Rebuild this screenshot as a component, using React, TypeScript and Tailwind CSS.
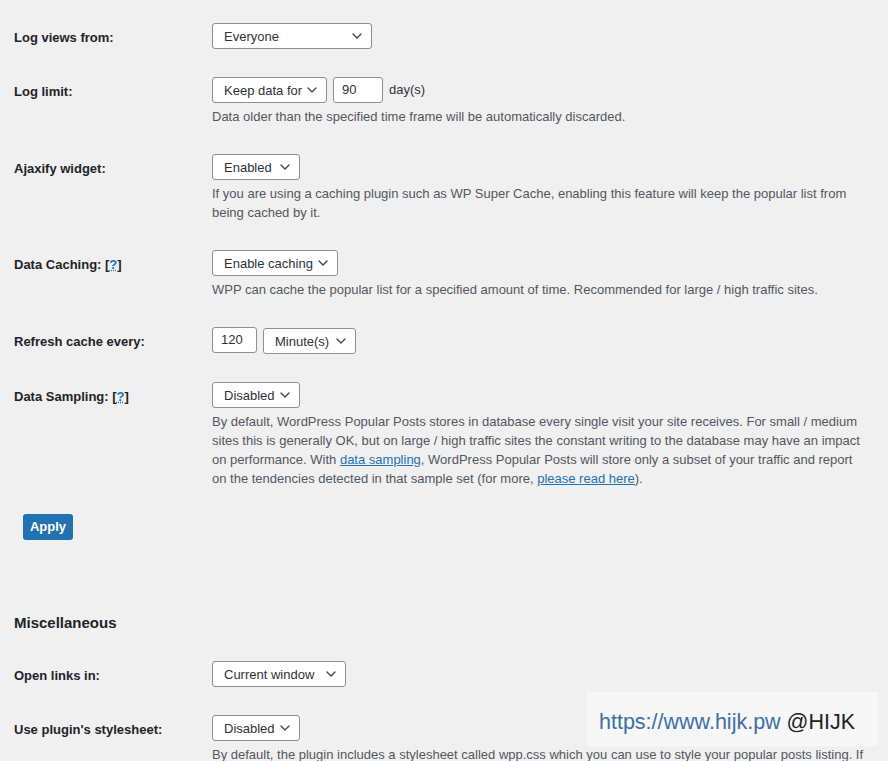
import React from 'react';

const font = { fontFamily: '"Liberation Sans", Arial, sans-serif' };

const Chevron: React.FC = () => (
  <svg width="10" height="6" viewBox="0 0 10 6" className="shrink-0">
    <path d="M1 1l4 4 4-4" fill="none" stroke="#3c434a" strokeWidth="1.3" strokeLinecap="round" strokeLinejoin="round" />
  </svg>
);

const Select: React.FC<{ value: string; width: string }> = ({ value, width }) => (
  <div
    className={`flex h-[26px] items-center justify-between rounded-[3px] border border-[#8c8f94] bg-white pl-[11px] pr-[9px] text-[13px] text-[#2c3338] ${width}`}
  >
    <span className="pt-[2px]">{value}</span>
    <Chevron />
  </div>
);

const Input: React.FC<{ value: string; width: string }> = ({ value, width }) => (
  <div
    className={`flex h-[26px] items-center rounded-[3px] border border-[#8c8f94] bg-white px-[8px] text-[13px] text-[#2c3338] ${width}`}
  >
    {value}
  </div>
);

const Help: React.FC = () => (
  <span className="font-bold">
    [<span className="text-[#2271b1] underline decoration-dotted">?</span>]
  </span>
);

const Row: React.FC<{ label: React.ReactNode; children: React.ReactNode }> = ({ label, children }) => (
  <div className="flex py-[14px]">
    <div className="w-[212px] shrink-0 pl-[14px] pt-[6px] text-[13px] font-bold leading-[18px] text-[#1d2327]">
      {label}
    </div>
    <div className="flex-1 pr-[16px]">{children}</div>
  </div>
);

const Desc: React.FC<{ children: React.ReactNode }> = ({ children }) => (
  <p className="mt-[4px] text-[13px] leading-[19px] text-[#50575e]">{children}</p>
);

export default function App() {
  return (
    <div className="relative h-[761px] overflow-hidden bg-[#f0f0f1] pt-[9px]" style={font}>
      <Row label="Log views from:">
        <Select value="Everyone" width="w-[160px]" />
      </Row>
      <Row label="Log limit:">
        <div className="flex items-center gap-[6px]">
          <Select value="Keep data for" width="w-[115px]" />
          <Input value="90" width="w-[50px]" />
          <span className="text-[13px] text-[#2c3338]">day(s)</span>
        </div>
        <Desc>Data older than the specified time frame will be automatically discarded.</Desc>
      </Row>
      <Row label="Ajaxify widget:">
        <Select value="Enabled" width="w-[88px]" />
        <Desc>
          If you are using a caching plugin such as WP Super Cache, enabling this feature will keep the popular list from
          being cached by it.
        </Desc>
      </Row>
      <Row
        label={
          <>
            Data Caching: <Help />
          </>
        }
      >
        <Select value="Enable caching" width="w-[126px]" />
        <Desc>WPP can cache the popular list for a specified amount of time. Recommended for large / high traffic sites.</Desc>
      </Row>
      <Row label="Refresh cache every:">
        <div className="flex items-start gap-[6px]">
          <Input value="120" width="w-[45px]" />
          <div className="mt-[1px]">
            <Select value="Minute(s)" width="w-[93px]" />
          </div>
        </div>
      </Row>
      <Row
        label={
          <>
            Data Sampling: <Help />
          </>
        }
      >
        <Select value="Disabled" width="w-[88px]" />
        <Desc>
          By default, WordPress Popular Posts stores in database every single visit your site receives. For small / medium
          sites this is generally OK, but on large / high traffic sites the constant writing to the database may have an
          impact on performance. With{' '}
          <a className="text-[#2271b1] underline">data sampling</a>, WordPress Popular Posts will store only a subset of
          your traffic and report
          <br />
          on the tendencies detected in that sample set (for more,{' '}
          <a className="text-[#2271b1] underline">please read here</a>).
        </Desc>
      </Row>
      <div className="pl-[23px] pt-[12px]">
        <button className="h-[26px] w-[50px] rounded-[3px] bg-[#2271b1] text-[13px] font-bold text-white">Apply</button>
      </div>
      <h2 className="mt-[73px] pl-[14px] text-[15px] font-bold leading-[20px] text-[#1d2327]">Miscellaneous</h2>
      <div className="mt-[14px]">
        <Row label="Open links in:">
          <Select value="Current window" width="w-[134px]" />
        </Row>
        <Row label="Use plugin's stylesheet:">
          <Select value="Disabled" width="w-[88px]" />
          <Desc>
            By default, the plugin includes a stylesheet called wpp.css which you can use to style your popular posts
            listing. If you wish to use your own stylesheet or do not want it to have it included in the header section of
            your site, use this.
          </Desc>
        </Row>
      </div>
      <div className="absolute left-[587px] top-[692px] flex h-[54px] w-[291px] items-center bg-[#f7f7f7] pl-[12px] pt-[6px]">
        <span className="whitespace-nowrap text-[21.5px] text-[#3b6fa6]">
          https://www.hijk.pw <span className="text-[#222]">@HIJK</span>
        </span>
      </div>
    </div>
  );
}
